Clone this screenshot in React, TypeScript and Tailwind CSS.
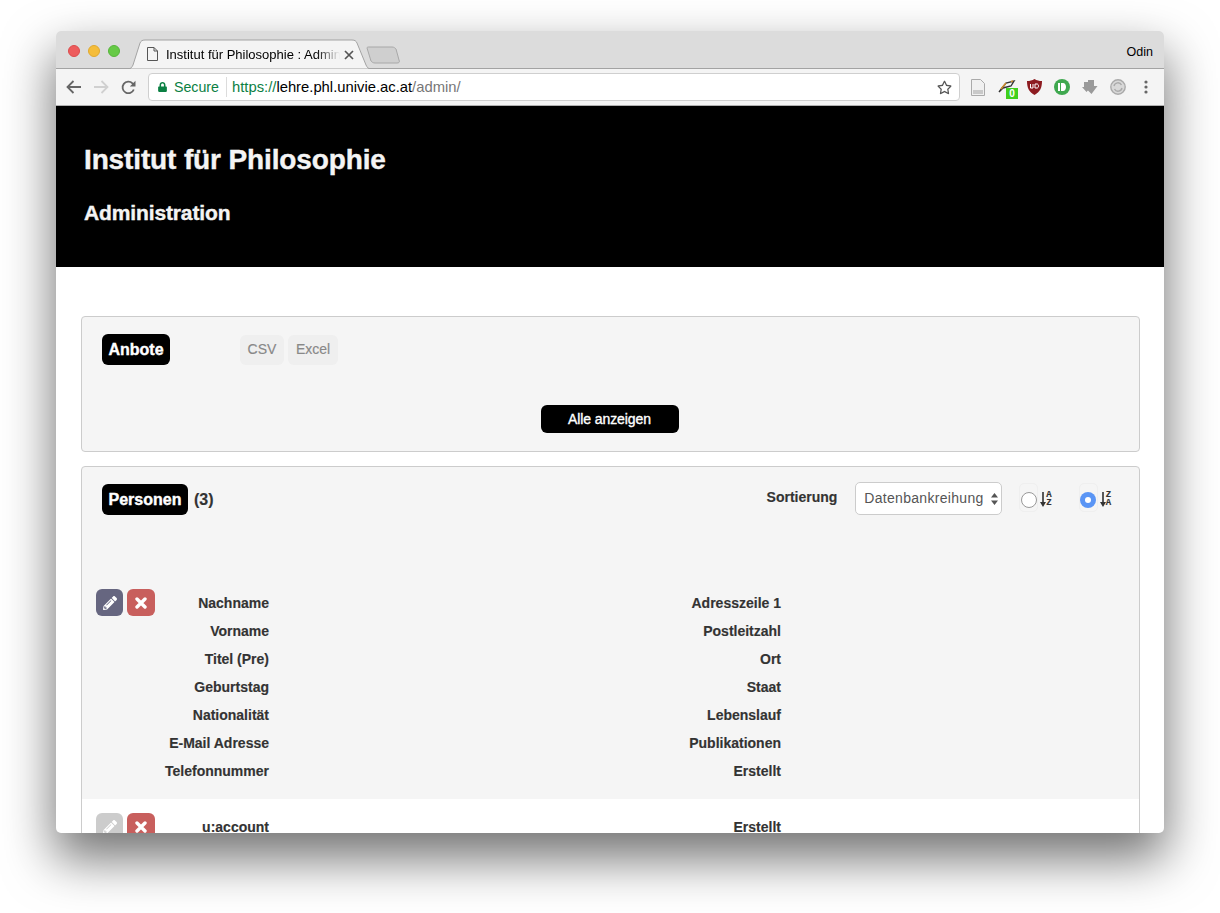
import { FaPencilAlt, FaLock, FaRegStar } from "react-icons/fa";

function Sort({ top, bottom }: { top: string; bottom: string }) {
  return (
    <div className="flex items-center text-[#333]">
      <svg width="6" height="15" viewBox="0 0 6 15" fill="#333">
        <path d="M2.2 0 H3.8 V10 H6 L3 15 L0 10 H2.2 Z" />
      </svg>
      <div className="flex flex-col items-center font-['Liberation_Mono',monospace] font-bold text-[9px] leading-[8px] ml-[0px]">
        <span>{top}</span>
        <span>{bottom}</span>
      </div>
    </div>
  );
}

function Times() {
  return (
    <svg width="12" height="12" viewBox="0 0 12 12" stroke="#fff" strokeWidth="3.4" strokeLinecap="round">
      <path d="M2 2 L10 10 M10 2 L2 10" />
    </svg>
  );
}

function Record({ left, right, editOff, white }: { left: string[]; right: string[]; editOff?: boolean; white?: boolean }) {
  return (
    <div className={`flex pl-[14px] pt-[14px] pb-[14px] ${white ? "bg-white" : ""}`}>
      <div className="w-[59px] flex gap-[4px] items-start shrink-0">
        <button className={`w-[27px] h-[27px] rounded-[6px] flex items-center justify-center text-white ${editOff ? "bg-[#cccccc]" : "bg-[#666680]"}`}>
          <FaPencilAlt className="w-[14px] h-[14px]" />
        </button>
        <button className="w-[28px] h-[27px] rounded-[6px] flex items-center justify-center bg-[#c85f5d]">
          <Times />
        </button>
      </div>
      <div className="w-[114px] shrink-0 text-right">
        {left.map((t) => (
          <div key={t} className="h-[28px] leading-[28px] whitespace-nowrap">{t}</div>
        ))}
      </div>
      <div className="w-[512px] shrink-0 text-right">
        {right.map((t) => (
          <div key={t} className="h-[28px] leading-[28px] whitespace-nowrap">{t}</div>
        ))}
      </div>
    </div>
  );
}

export default function App() {
  return (
    <div className="w-[1220px] h-[913px] bg-white pt-[31px] pl-[56px] overflow-hidden font-['Liberation_Sans',Arial,sans-serif]">
      <div className="relative w-[1108px] h-[802px] rounded-[5px] overflow-hidden bg-white shadow-[0_24px_50px_2px_rgba(0,0,0,0.55)]">
        {/* Tab strip */}
        <div className="relative h-[38px] bg-[#dcdcdc] border-b border-[#a3a3a3] flex items-center">
          <div className="flex gap-[8px] ml-[12px] mt-[3px]">
            <span className="w-[12px] h-[12px] rounded-full bg-[#ed5c5d] border border-[#dc4b4c]" />
            <span className="w-[12px] h-[12px] rounded-full bg-[#f5bd3a] border border-[#e0a92f]" />
            <span className="w-[12px] h-[12px] rounded-full bg-[#66ca46] border border-[#57b53b]" />
          </div>
          <svg className="absolute left-[70px] top-[8px]" width="282" height="30" viewBox="0 0 282 30">
            <path d="M2 30 C5 30 6 28 7 26 L14 4 C15 2 16 1 19 1 L226 1 C229 1 230 2 231 4 L240 26 C241 28 242 30 245 30 Z" fill="#f4f4f4" stroke="#a3a3a3" />
            <path d="M241 9 C241 8 242 8 243 8 L266 8 C268 8 269 9 270 10 L273 21 C274 23 273 24 271 24 L249 24 C247 24 246 23 245 22 Z" fill="#cfcfcf" stroke="#a8a8a8" />
          </svg>
          <svg className="absolute left-[91px] top-[16px]" width="11" height="14" viewBox="0 0 11 14" fill="none" stroke="#555">
            <path d="M1 .5 H7 L10.5 4 V13.5 H.5 V.5 Z M7 .5 V4 H10.5" />
          </svg>
          <span className="absolute left-[110px] top-[16px] whitespace-nowrap text-[13px] leading-[16px] text-black [mask-image:linear-gradient(to_right,black_150px,transparent_174px)]">
            Institut für Philosophie : Admin
          </span>
          <svg className="absolute left-[288px] top-[19px]" width="10" height="10" viewBox="0 0 10 10" stroke="#555" strokeWidth="1.7">
            <path d="M1 1 L9 9 M9 1 L1 9" />
          </svg>
          <span className="ml-auto mr-[11px] text-[12.5px] text-black mt-[6px]">Odin</span>
        </div>
        {/* Toolbar */}
        <div className="h-[37px] bg-[#f4f4f4] border-b border-[#b0b0b0] flex items-center">
          <svg className="ml-[10px]" width="16" height="14" viewBox="0 0 16 14" fill="none" stroke="#666" strokeWidth="1.8">
            <path d="M15 7 H2 M7.5 1 L1.5 7 L7.5 13" />
          </svg>
          <svg className="ml-[11px]" width="16" height="14" viewBox="0 0 16 14" fill="none" stroke="#d0d0d0" strokeWidth="1.8">
            <path d="M1 7 H14 M8.5 1 L14.5 7 L8.5 13" />
          </svg>
          <svg className="ml-[12px]" width="15" height="15" viewBox="0 0 15 15" fill="none" stroke="#666" strokeWidth="1.8">
            <path d="M12.8 9.5 A5.8 5.8 0 1 1 11.5 3.3 L13.5 5.3" />
            <path d="M14.5 0.8 V6.5 H8.8 Z" fill="#666" stroke="none" />
          </svg>
          <div className="ml-[12px] w-[812px] h-[28px] bg-white border border-[#cfcfcf] rounded-[4px] flex items-center text-[14px]">
            <FaLock className="ml-[9px] w-[9px] h-[10px] text-[#0b8043]" />
            <span className="ml-[7px] mt-[1px] text-[#0b8043] text-[14.2px]">Secure</span>
            <span className="ml-[7px] w-px h-[20px] bg-[#dcdcdc]" />
            <span className="ml-[5px] text-[14.8px] text-[#0b8043]">https://</span>
            <span className="text-[14.8px] text-black">lehre.phl.univie.ac.at</span>
            <span className="text-[14.8px] text-[#777]">/admin/</span>
            <FaRegStar className="ml-auto mr-[7px] w-[15px] h-[15px] text-[#555]" />
          </div>
          <div className="relative flex-1">
            <svg className="absolute left-[11px] -top-[8px]" width="14" height="17" viewBox="0 0 14 17">
              <path d="M.5.5 H9.5 L13.5 4.5 V16.5 H.5 Z" fill="#f0f0f0" stroke="#aaa" />
              <rect x="2" y="11" width="10" height="4" fill="#c9c9c9" />
            </svg>
            <svg className="absolute left-[38px] -top-[9px]" width="18" height="16" viewBox="0 0 18 16">
              <path d="M1 14 L8 5 L16 3 L13 8 L5 10 Z" fill="none" stroke="#333" strokeWidth="1.4" />
              <path d="M3 11 L8 5 M13 3.5 L15 3" stroke="#c98a2d" strokeWidth="1.6" />
            </svg>
            <span className="absolute left-[46px] top-[1px] w-[12px] h-[11px] bg-[#3fd01d] text-white text-[10px] leading-[11px] font-bold text-center">0</span>
            <svg className="absolute left-[67px] -top-[8px]" width="15" height="16" viewBox="0 0 15 16">
              <path d="M7.5 0 C10 1.5 12 2 15 2 C15 9 13 13 7.5 16 C2 13 0 9 0 2 C3 2 5 1.5 7.5 0 Z" fill="#8d1b20" />
              <path d="M3.5 5 V9 H6 V5 M8 5 V9 H10 C12 9 12 5 10 5 Z" fill="none" stroke="#fff" strokeWidth="1" />
            </svg>
            <svg className="absolute left-[94px] -top-[8px]" width="16" height="16" viewBox="0 0 16 16">
              <circle cx="8" cy="8" r="8" fill="#3fa84f" />
              <rect x="4" y="4" width="2" height="8" fill="#fff" />
              <path d="M7 4 H9 C13 4 13 12 9 12 H7 Z" fill="#fff" />
            </svg>
            <svg className="absolute left-[122px] -top-[8px]" width="16" height="16" viewBox="0 0 16 16" fill="#9a9a9a">
              <path d="M2 3 H7 V8 H9 L4.5 13 L0 8 H2 Z" />
              <path d="M6 1 H12 V7 H15.5 L9.5 15 L3.5 9 H6 Z" />
            </svg>
            <svg className="absolute left-[150px] -top-[8px]" width="16" height="16" viewBox="0 0 16 16" fill="none" stroke="#aaa">
              <circle cx="8" cy="8" r="7.2" strokeWidth="1.4" fill="#d8d8d8" />
              <path d="M4 7 A4 4 0 0 1 11.5 6 M12 9 A4 4 0 0 1 4.5 10" strokeWidth="1.4" />
            </svg>
            <svg className="absolute left-[184px] -top-[7px]" width="4" height="14" viewBox="0 0 4 14" fill="#666">
              <circle cx="2" cy="2" r="1.6" />
              <circle cx="2" cy="7" r="1.6" />
              <circle cx="2" cy="12" r="1.6" />
            </svg>
          </div>
        </div>
        {/* Header */}
        <header className="h-[161px] bg-black text-[#f4f4f4] font-bold pl-[28px] pt-[38px] tracking-[-0.13px] [-webkit-text-stroke:0.4px_#f4f4f4]">
          <h1 className="text-[28px] leading-[32px]">Institut für Philosophie</h1>
          <h2 className="text-[21px] leading-[24px] mt-[25px]">Administration</h2>
        </header>
        {/* Content */}
        <main className="pl-[25px] pr-[24px] pt-[49px] text-[14px] font-bold text-[#333] [-webkit-text-stroke:0.15px_#333]">
          <section className="relative h-[136px] bg-[#f5f5f5] border border-[#cccccc] rounded-[4px] pt-[17px] pl-[20px]">
            <div className="flex items-center">
              <span className="h-[31px] w-[68px] bg-black text-white text-[16px] rounded-[6px] flex items-center justify-center [-webkit-text-stroke:0.4px_#fff]">Anbote</span>
              <span className="ml-[70px] h-[30px] w-[44px] bg-[#efefef] text-[#888] font-normal rounded-[6px] flex items-center justify-center [-webkit-text-stroke:0.15px_#888]">CSV</span>
              <span className="ml-[4px] h-[30px] w-[50px] bg-[#efefef] text-[#888] font-normal rounded-[6px] flex items-center justify-center [-webkit-text-stroke:0.15px_#888]">Excel</span>
            </div>
            <div className="flex justify-center mt-[40px] -ml-[22px]">
              <button className="w-[138px] h-[28px] bg-black text-white text-[14px] font-normal tracking-[-0.1px] rounded-[6px] [-webkit-text-stroke:0.35px_#fff]">Alle anzeigen</button>
            </div>
          </section>
          <section className="mt-[14px] h-[500px] bg-[#f5f5f5] border border-[#cccccc] rounded-[4px]">
            <div className="h-[108px] pt-[15px] pl-[20px] flex items-start">
              <span className="mt-[2px] h-[31px] w-[86px] bg-black text-white text-[16px] rounded-[6px] flex items-center justify-center [-webkit-text-stroke:0.4px_#fff]">Personen</span>
              <span className="ml-[6px] mt-[2px] h-[31px] leading-[31px] text-[16px]">(3)</span>
              <span className="ml-[553px] mt-[1px] h-[28px] leading-[28px]">Sortierung</span>
              <div className="ml-[18px] w-[147px] h-[33px] bg-white border border-[#cccccc] rounded-[5px] flex items-center pl-[8px] text-[14px] font-normal text-[#555] tracking-[0.3px] [-webkit-text-stroke:0]">
                <span>Datenbankreihung</span>
                <svg className="ml-auto mr-[3px]" width="7" height="12" viewBox="0 0 7 12" fill="#555">
                  <path d="M3.5 0 L7 4.5 H0 Z M3.5 12 L7 7.5 H0 Z" />
                </svg>
              </div>
              <div className="ml-[17px] mt-[1px] w-[19px] h-[29px] rounded-[5px] border border-[#efefef] flex items-end justify-center pb-[3px] shrink-0">
                <span className="w-[16px] h-[16px] rounded-full bg-white border border-[#999]" />
              </div>
              <div className="ml-[2px] mt-[9px]"><Sort top="A" bottom="Z" /></div>
              <div className="ml-[27px] mt-[1px] w-[19px] h-[29px] rounded-[5px] border border-[#efefef] flex items-end justify-center pb-[3px] shrink-0">
                <span className="w-[16px] h-[16px] rounded-full bg-[#5a95f5] flex items-center justify-center">
                  <span className="w-[6px] h-[6px] rounded-full bg-white" />
                </span>
              </div>
              <div className="ml-[2px] mt-[9px]"><Sort top="Z" bottom="A" /></div>
            </div>
            <Record
              left={["Nachname", "Vorname", "Titel (Pre)", "Geburtstag", "Nationalität", "E-Mail Adresse", "Telefonnummer"]}
              right={["Adresszeile 1", "Postleitzahl", "Ort", "Staat", "Lebenslauf", "Publikationen", "Erstellt"]}
            />
            <Record white editOff left={["u:account"]} right={["Erstellt"]} />
          </section>
        </main>
      </div>
    </div>
  );
}
